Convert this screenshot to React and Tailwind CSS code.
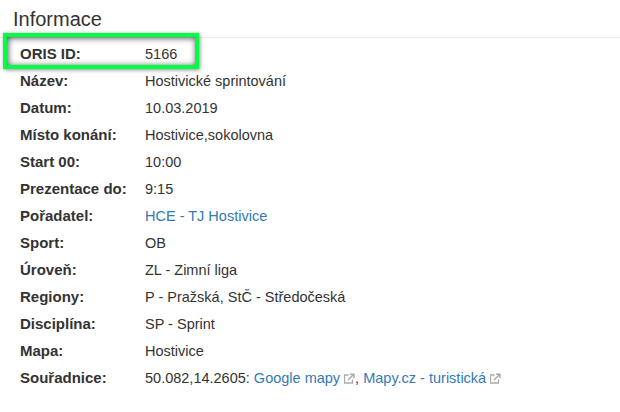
const rows = [
  ['ORIS ID:', '5166'],
  ['Název:', 'Hostivické sprintování'],
  ['Datum:', '10.03.2019'],
  ['Místo konání:', 'Hostivice,sokolovna'],
  ['Start 00:', '10:00'],
  ['Prezentace do:', '9:15'],
  ['Pořadatel:', <a className="text-[#337ab7]">HCE - TJ Hostivice</a>],
  ['Sport:', 'OB'],
  ['Úroveň:', 'ZL - Zimní liga'],
  ['Regiony:', 'P - Pražská, StČ - Středočeská'],
  ['Disciplína:', 'SP - Sprint'],
  ['Mapa:', 'Hostivice'],
  [
    'Souřadnice:',
    <>
      50.082,14.2605: <a className="text-[#337ab7]">Google mapy</a>
      <ExternalIcon />, <a className="text-[#337ab7]">Mapy.cz - turistická</a>
      <ExternalIcon />
    </>
  ]
];

function ExternalIcon() {
  return (
    <svg className="inline-block w-[11px] h-[11px] ml-[4px] align-[-1px] text-[#aaa]" viewBox="0 0 11 11" fill="none" stroke="currentColor">
      <path d="M8.5 6.5v3.5h-8v-8h4" strokeWidth="1.3" />
      <path d="M4 7l5-5M6 1.2h4v4" strokeWidth="1.5" />
    </svg>
  );
}

export default function App() {
  return (
    <div className="relative w-[620px] h-[412px] overflow-hidden bg-white text-[#333] text-[14.5px] leading-[20px] font-['Liberation_Sans',Arial,sans-serif]">
      <h2 className="h-[38px] pl-[13px] pt-[7px] text-[20px] leading-[24px] border-b border-[#eee]">Informace</h2>
      <dl className="pt-[2px]">
        {rows.map(([label, value]) => (
          <div key={label} className="flex h-[27px] items-center">
            <dt className="w-[145px] pl-[20px] font-bold text-[15px]">{label}</dt>
            <dd>{value}</dd>
          </div>
        ))}
      </dl>
      {/* green highlight over the first row */}
      <div className="absolute left-[3px] top-[33px] w-[196px] h-[36px] border-[4px] border-[#0f4] shadow-[1px_1px_4px_rgba(0,0,0,0.45),inset_1px_1px_6px_rgba(0,0,0,0.7)]"></div>
    </div>
  );
}
